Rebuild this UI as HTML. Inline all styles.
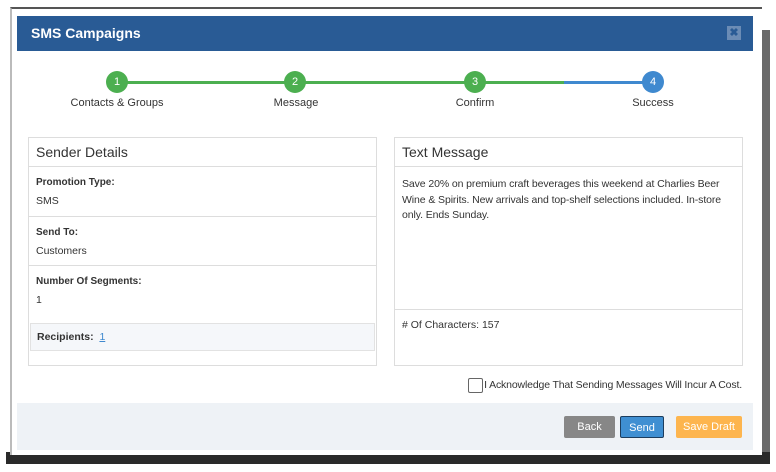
<!DOCTYPE html>
<html><head><style>
*{box-sizing:border-box;margin:0;padding:0}
body{width:776px;height:472px;background:#fff;position:relative;overflow:hidden;font-family:"Liberation Sans",Arial,sans-serif;font-size:11px;color:#333}
.shb{position:absolute;left:6px;top:452px;width:764px;height:12px;background:#2a2a2a}
.shr{position:absolute;left:760px;top:30px;width:10px;height:432px;background:#6a6a6a}
.modal{position:absolute;left:10px;top:7px;width:752px;height:448px;background:#fff;border-top:2px solid #555;border-left:2px solid #bbb}
.hdr{position:absolute;left:17px;top:16px;width:736px;height:35px;background:#295b95;color:#fff;font-weight:bold;font-size:14px;line-height:35px;padding-left:14px}
.x{position:absolute;right:12px;top:10px;width:14px;height:14px;background:#6b8cb5;color:#295b95;font-size:11px;line-height:14px;text-align:center}
.line{position:absolute;top:81px;height:3px}
.dot{position:absolute;top:71px;width:22px;height:22px;border-radius:50%;color:#fff;text-align:center;line-height:22px;font-size:11px}
.lbl{position:absolute;top:97px;width:140px;text-align:center;font-size:11px;color:#333}
.panel{position:absolute;top:137px;height:229px;border:1px solid #ddd;background:#fff}
.ph{height:29px;border-bottom:1px solid #ddd;font-size:14px;line-height:29px;padding-left:7px;color:#333}
.row{position:absolute;left:0;right:0;border-bottom:1px solid #ddd;padding-left:7px}
.k{font-weight:bold;font-size:10px;margin-top:10px}
.v{margin-top:7px;font-size:10.5px}
.btn{position:absolute;top:416px;height:22px;color:#fff;font-size:11px;line-height:22px;text-align:center;border-radius:2px}
</style></head><body>
<div class="shr"></div>
<div class="shb"></div>
<div class="modal"></div>
<div class="hdr">SMS Campaigns<div class="x">✖</div></div>
<div class="line" style="left:117px;width:447px;background:#4caf50"></div>
<div class="line" style="left:564px;width:89px;background:#3f89cf"></div>
<div class="dot" style="left:106px;background:#4caf50">1</div>
<div class="dot" style="left:284px;background:#4caf50">2</div>
<div class="dot" style="left:464px;background:#4caf50">3</div>
<div class="dot" style="left:642px;background:#3f89cf">4</div>
<div class="lbl" style="left:47px">Contacts &amp; Groups</div>
<div class="lbl" style="left:226px">Message</div>
<div class="lbl" style="left:405px">Confirm</div>
<div class="lbl" style="left:583px">Success</div>
<div class="panel" style="left:28px;width:349px">
<div class="ph">Sender Details</div>
<div class="row" style="top:29px;height:50px"><div class="k">Promotion Type:</div><div class="v">SMS</div></div>
<div class="row" style="top:79px;height:49px"><div class="k">Send To:</div><div class="v">Customers</div></div>
<div class="row" style="top:128px;height:57px;border:none"><div class="k">Number Of Segments:</div><div class="v">1</div></div>
<div style="position:absolute;left:1px;right:1px;top:185px;height:28px;background:#f5f7fa;border:1px solid #e2e2e2;padding-left:6px;line-height:26px;font-weight:bold;font-size:10.5px">Recipients:&nbsp; <span style="color:#3f89cf;text-decoration:underline;font-weight:normal">1</span></div>
</div>
<div class="panel" style="left:394px;width:349px">
<div class="ph">Text Message</div>
<div style="padding:10px 7px;line-height:15.5px;font-size:10.5px;height:143px;border-bottom:1px solid #ddd;letter-spacing:-0.1px">Save 20% on premium craft beverages this weekend at Charlies Beer Wine &amp; Spirits. New arrivals and top-shelf selections included. In-store only. Ends Sunday.</div>
<div style="padding:9px 7px;font-size:10.5px">#&nbsp;Of Characters: 157</div>
</div>
<div style="position:absolute;left:468px;top:378px;width:15px;height:15px;border:1px solid #666;border-radius:2px"></div>
<div style="position:absolute;right:34px;top:379px;font-size:10.5px;letter-spacing:-0.15px;white-space:nowrap">I Acknowledge That Sending Messages Will Incur A Cost.</div>
<div style="position:absolute;left:17px;top:403px;width:736px;height:47px;background:#eef2f6"></div>
<div class="btn" style="left:564px;width:51px;background:#878787">Back</div>
<div class="btn" style="left:620px;width:44px;background:#3f8fd2;border:1px solid #1c3d5e">Send</div>
<div class="btn" style="left:676px;width:66px;background:#fdb54e">Save Draft</div>
</body></html>
